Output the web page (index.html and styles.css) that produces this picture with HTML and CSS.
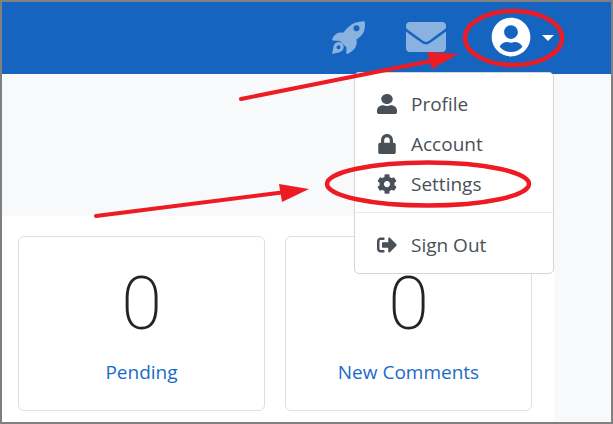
FILE: index.html
```html
<!DOCTYPE html>
<html lang="en">
<head>
    <meta charset="UTF-8">
    <title>Dashboard</title>
    <link rel="stylesheet" href="styles.css">
</head>
<body>
    <div class="frame">
        <nav class="navbar">
            <svg class="nav-icon rocket" viewBox="0 0 33 33"><path fill-rule="evenodd" d="M32.700 .2C33.200 4 33 8 31.500 11.500 30 14.500 27 16.500 24.500 18.500 25 22 24.500 25 23 27 21 29.500 18.500 31.500 15.500 33 14.500 33.200 14.200 32.500 14.300 31.500L14.500 26.500 8 20 1 19.500C.2 19.500-.1 18.800.3 18 1 16 2.500 14 4 13 6 11.500 8.500 11.300 11.500 11.500 14 8 17 5 20.500 3 24 1 28 .2 32.700 .2zM24.500 4.300a3 3 0 1 0 0 6 3 3 0 0 0 0-6zM6.500 21c2.900 0 5.200 2.300 5.200 5 0 2.900-2.400 5-5.200 5.500-2.200.4-4.500 1-6.300 1.500.3-1.900.7-4.300 1.100-6.500C1.800 23.200 3.700 21 6.500 21zm0 3.200a2 2 0 1 0 0 4 2 2 0 0 0 0-4z"/></svg>
            <svg class="nav-icon envelope" viewBox="0 0 512 512"><path d="M502.3 190.8c3.900-3.100 9.700-.2 9.700 4.700V400c0 26.500-21.500 48-48 48H48c-26.500 0-48-21.500-48-48V195.600c0-5 5.700-7.800 9.700-4.700 22.400 17.400 52.100 39.500 154.100 113.600 21.100 15.400 56.700 47.800 92.200 47.600 35.700.3 72-32.800 92.300-47.600 102-74.100 131.600-96.300 154-113.700zM256 320c23.200.4 56.600-29.200 73.400-41.400 132.700-96.300 142.800-104.700 173.400-128.700 5.800-4.500 9.200-11.500 9.200-18.900v-19c0-26.500-21.500-48-48-48H48C21.500 64 0 85.500 0 112v19c0 7.400 3.400 14.300 9.200 18.900 30.600 23.900 40.700 32.400 173.400 128.700 16.800 12.200 50.200 41.800 73.400 41.400z"/></svg>
            <svg class="user-circle" viewBox="0 0 496 512"><path d="M248 8C111 8 0 119 0 256s111 248 248 248 248-111 248-248S385 8 248 8zm0 96c48.600 0 88 39.400 88 88s-39.400 88-88 88-88-39.400-88-88 39.400-88 88-88zm0 344c-58.700 0-111.300-26.600-146.500-68.200 18.800-35.400 55.600-59.800 98.500-59.800 2.400 0 4.800.4 7.100 1.100 13 4.200 26.600 6.900 40.900 6.900 14.300 0 28-2.700 40.900-6.900 2.300-.7 4.700-1.100 7.100-1.100 42.900 0 79.700 24.400 98.500 59.800C359.300 421.400 306.700 448 248 448z"/></svg>
            <span class="caret"></span>
        </nav>

        <div class="layout">
            <main class="content">
                <div class="top-space"></div>
                <div class="panel">
                    <div class="card">
                        <div class="count">0</div>
                        <a class="card-link">Pending</a>
                    </div>
                    <div class="card">
                        <div class="count">0</div>
                        <a class="card-link">New Comments</a>
                    </div>
                </div>
            </main>
        </div>

        <div class="menu">
            <a class="menu-item">
                <svg class="menu-icon" viewBox="0 0 448 512" preserveAspectRatio="none"><path d="M224 256c70.700 0 128-57.300 128-128S294.700 0 224 0 96 57.300 96 128s57.300 128 128 128zm89.600 32h-16.700c-22.200 10.200-46.900 16-72.900 16s-50.600-5.800-72.900-16h-16.700C60.200 288 0 348.200 0 422.400V464c0 26.500 21.500 48 48 48h352c26.500 0 48-21.500 48-48v-41.600c0-74.200-60.200-134.400-134.400-134.400z"/></svg>
                Profile
            </a>
            <a class="menu-item">
                <svg class="menu-icon" viewBox="0 0 448 512"><path d="M400 224h-24v-72C376 68.200 307.800 0 224 0S72 68.200 72 152v72H48c-26.500 0-48 21.500-48 48v192c0 26.500 21.500 48 48 48h352c26.500 0 48-21.500 48-48V272c0-26.500-21.500-48-48-48zm-104 0H152v-72c0-39.700 32.300-72 72-72s72 32.300 72 72v72z"/></svg>
                Account
            </a>
            <a class="menu-item">
                <svg class="menu-icon" viewBox="0 0 512 512"><path d="M487.400 315.700l-42.600-24.600c4.300-23.200 4.300-47 0-70.200l42.600-24.600c4.900-2.800 7.100-8.600 5.500-14-11.100-35.600-30-67.800-54.700-94.600-3.800-4.100-10-5.100-14.800-2.300L380.800 110c-17.900-15.400-38.500-27.300-60.800-35.100V25.800c0-5.600-3.900-10.500-9.400-11.700-36.700-8.200-74.300-7.800-109.200 0-5.500 1.200-9.400 6.100-9.400 11.700V75c-22.200 7.900-42.800 19.800-60.800 35.100L88.700 85.500c-4.900-2.800-11-1.900-14.800 2.300-24.700 26.700-43.600 58.900-54.700 94.600-1.700 5.400.6 11.200 5.500 14L67.300 221c-4.300 23.200-4.300 47 0 70.200l-42.600 24.600c-4.900 2.800-7.100 8.600-5.500 14 11.100 35.600 30 67.800 54.700 94.600 3.800 4.100 10 5.100 14.800 2.300l42.600-24.600c17.900 15.400 38.500 27.300 60.800 35.100v49.200c0 5.600 3.900 10.500 9.400 11.700 36.700 8.200 74.300 7.800 109.200 0 5.500-1.200 9.400-6.100 9.400-11.700v-49.200c22.200-7.900 42.800-19.800 60.800-35.100l42.600 24.600c4.900 2.800 11 1.900 14.800-2.300 24.700-26.700 43.600-58.900 54.700-94.600 1.500-5.500-.7-11.300-5.600-14.100zM256 336c-44.100 0-80-35.900-80-80s35.900-80 80-80 80 35.900 80 80-35.900 80-80 80z"/></svg>
                Settings
            </a>
            <div class="menu-divider"></div>
            <a class="menu-item">
                <svg class="menu-icon" viewBox="0 0 512 512"><path d="M497 273L329 441c-15 15-41 4.500-41-17v-96H152c-13.300 0-24-10.700-24-24v-96c0-13.300 10.700-24 24-24h136V88c0-21.400 25.900-32 41-17l168 168c9.300 9.400 9.300 24.600 0 34zM192 436v-40c0-6.600-5.400-12-12-12H96c-17.700 0-32-14.300-32-32V160c0-17.700 14.300-32 32-32h84c6.600 0 12-5.400 12-12V76c0-6.600-5.400-12-12-12H96c-53 0-96 43-96 96v192c0 53 43 96 96 96h84c6.600 0 12-5.400 12-12z"/></svg>
                Sign Out
            </a>
        </div>

        <!-- red marks drawn on top of the screenshot -->
        <svg class="marks" viewBox="0 0 613 424">
            <ellipse cx="513.500" cy="38" rx="48.500" ry="27"/>
            <ellipse cx="428" cy="184" rx="101" ry="21.500"/>
            <line x1="241" y1="99" x2="436" y2="60"/>
            <polygon points="458,54 427,52 432,69"/>
            <line x1="96" y1="216" x2="286" y2="192"/>
            <polygon points="309,189 279,184 282,202"/>
        </svg>
    </div>
</body>
</html>
```

FILE: styles.css
```css
* {
    box-sizing: border-box;
}
body {
    margin: 0;
    font-family: "Open Sans", "Noto Sans", sans-serif;
    background: #fff;
}
.frame {
    position: relative;
    display: flex;
    flex-direction: column;
    width: 613px;
    height: 424px;
    border: 2px solid #808080;
    overflow: hidden;
    background: #f8f9fa;
}
.navbar {
    display: flex;
    align-items: center;
    justify-content: flex-end;
    flex-shrink: 0;
    height: 72px;
    padding: 0 57px 2px 0;
    background: #1565c0;
}
.nav-icon {
    fill: rgba(255, 255, 255, 0.5);
}
.rocket {
    width: 33px;
    height: 33px;
    margin-right: 41px;
}
.envelope {
    width: 40px;
    height: 40px;
    margin-right: 45px;
}
.user-circle {
    width: 40px;
    height: 40px;
    margin-right: 11px;
    fill: #fff;
}
.caret {
    width: 0;
    height: 0;
    margin-top: 2px;
    border-top: 6px solid #fff;
    border-left: 6.5px solid transparent;
    border-right: 6.5px solid transparent;
}
.layout {
    flex: 1;
    display: flex;
}
.content {
    display: flex;
    flex-direction: column;
    width: 552px;
}
.top-space {
    height: 142px;
}
.panel {
    flex: 1;
    display: flex;
    gap: 20px;
    padding: 20px 16px 0;
    background: #fff;
}
.card {
    display: flex;
    flex-direction: column;
    align-items: center;
    width: 247px;
    height: 175px;
    border: 1px solid #dfdfdf;
    border-radius: 6px;
}
.count {
    margin-top: 22px;
    font-family: Roboto, "Open Sans", sans-serif;
    font-size: 74px;
    font-weight: 200;
    line-height: 90px;
    color: #212529;
}
.card-link {
    margin-top: 10px;
    font-size: 19px;
    line-height: 26px;
    color: #1a6bc8;
}
.menu {
    position: absolute;
    top: 70px;
    left: 352px;
    width: 200px;
    height: 202px;
    padding-top: 11px;
    background: #fff;
    border: 1px solid #d5d5d5;
    border-radius: 5px;
}
.menu-item {
    display: flex;
    align-items: center;
    height: 40px;
    padding-left: 22px;
    font-size: 19px;
    color: #495057;
}
.menu-icon {
    width: 20px;
    height: 20px;
    margin-right: 14px;
    fill: #495057;
    flex-shrink: 0;
}
.menu-divider {
    height: 1px;
    margin: 8px 0 12px;
    background: #e9ecef;
}
.marks {
    position: absolute;
    top: -2px;
    left: -2px;
    width: 613px;
    height: 424px;
    pointer-events: none;
}
.marks ellipse {
    fill: none;
    stroke: #ed1c24;
    stroke-width: 4.5;
}
.marks line {
    stroke: #ed1c24;
    stroke-width: 4;
    stroke-linecap: round;
}
.marks polygon {
    fill: #ed1c24;
}
```
